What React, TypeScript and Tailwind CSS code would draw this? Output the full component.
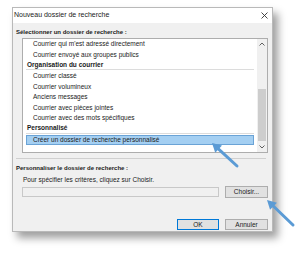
import React from "react";

const items1 = ["Courrier qui m'est adressé directement", "Courrier envoyé aux groupes publics"];
const items2 = [
  "Courrier classé",
  "Courrier volumineux",
  "Anciens messages",
  "Courrier avec pièces jointes",
  "Courrier avec des mots spécifiques",
];

function Item({ text }: { text: string }) {
  return <div className="flex h-[10.5px] items-center pl-[7px] whitespace-nowrap">{text}</div>;
}

function GroupHeader({ text }: { text: string }) {
  return (
    <div className="mb-[1px] flex h-[10px] items-center border-b border-[#dcdcdc] pl-[1px] font-bold whitespace-nowrap">
      {text}
    </div>
  );
}

function Arrow({ x1, y1, x2, y2 }: { x1: number; y1: number; x2: number; y2: number }) {
  const a = Math.atan2(y2 - y1, x2 - x1);
  const len = 9;
  const w = 5;
  const bx = x2 - len * Math.cos(a);
  const by = y2 - len * Math.sin(a);
  const px = -Math.sin(a) * w;
  const py = Math.cos(a) * w;
  return (
    <g>
      <line x1={x1} y1={y1} x2={bx} y2={by} stroke="#5b9bd5" strokeWidth={3} strokeLinecap="round" />
      <polygon points={`${x2},${y2} ${bx + px},${by + py} ${bx - px},${by - py}`} fill="#5b9bd5" />
    </g>
  );
}

export default function App() {
  return (
    <div className="relative h-[253px] w-[300px] overflow-hidden bg-white pt-[7px] pl-[12px] font-['Liberation_Sans',Arial,sans-serif] text-[6.5px] text-[#1a1a1a]">
      <div className="flex h-[225px] w-[261px] flex-col border border-[#b9b9b9] bg-[#f0f0f0] shadow-[5px_6px_8px_rgba(0,0,0,0.38)]">
        {/* title bar */}
        <div className="flex h-[15px] items-center justify-between bg-white pr-[4px] pl-[1px]">
          <span className="text-[7px]">Nouveau dossier de recherche</span>
          <svg width="7" height="7" viewBox="0 0 7 7">
            <path d="M0.5 0.5 L6.5 6.5 M6.5 0.5 L0.5 6.5" stroke="#333" strokeWidth="0.9" />
          </svg>
        </div>

        <div className="flex flex-col pt-[5px]">
          <div className="pl-[3px] text-[6px] font-bold leading-[9px]">Sélectionner un dossier de recherche :</div>

          {/* list box */}
          <div className="mt-[1px] mr-[4px] ml-[9px] flex h-[115px] border border-[#adadad] bg-white">
            <div className="flex flex-1 flex-col pt-[0px] pr-[3px] pl-[3px] text-[6.5px]">
              {items1.map((t) => (
                <Item key={t} text={t} />
              ))}
              <GroupHeader text="Organisation du courrier" />
              {items2.map((t) => (
                <Item key={t} text={t} />
              ))}
              <GroupHeader text="Personnalisé" />
              <div className="flex h-[10px] items-center border border-[#6aa3d6] bg-[#a4cff2] pl-[6px] whitespace-nowrap">
                Créer un dossier de recherche personnalisé
              </div>
            </div>
            {/* scrollbar */}
            <div className="flex w-[10px] flex-col bg-[#f0f0f0]">
              <div className="flex h-[10px] items-center justify-center">
                <svg width="6" height="4" viewBox="0 0 6 4">
                  <path d="M0.5 3.5 L3 1 L5.5 3.5" stroke="#606060" strokeWidth="1" fill="none" />
                </svg>
              </div>
              <div className="mt-[40px] mx-[1px] h-[52px] bg-[#cdcdcd]" />
              <div className="flex-1" />
              <div className="flex h-[10px] items-center justify-center">
                <svg width="6" height="4" viewBox="0 0 6 4">
                  <path d="M0.5 0.5 L3 3 L5.5 0.5" stroke="#606060" strokeWidth="1" fill="none" />
                </svg>
              </div>
            </div>
          </div>

          <div className="mt-[5px] mr-[6px] ml-[3px] h-[1px] bg-[#d0d0d0]" />

          <div className="mt-[5px] pl-[3px] text-[6px] font-bold leading-[9px]">
            Personnaliser le dossier de recherche :
          </div>
          <div className="mt-[2px] pl-[10px] leading-[9px]">Pour spécifier les critères, cliquez sur Choisir.</div>
          <div className="mt-[2px] mr-[4px] ml-[9px] flex items-center gap-[6px]">
            <div className="h-[10px] flex-1 border border-[#c8c8c8] bg-[#f0f0f0]" />
            <div className="flex h-[12px] w-[43px] items-center justify-center border border-[#adadad] bg-[#e1e1e1]">
              Choisir...
            </div>
          </div>

          <div className="mt-[21px] mr-[4px] flex justify-end gap-[6px]">
            <div className="flex h-[11px] w-[42px] items-center justify-center border border-[#0078d7] bg-[#e1e1e1]">
              OK
            </div>
            <div className="flex h-[11px] w-[43px] items-center justify-center border border-[#adadad] bg-[#e1e1e1]">
              Annuler
            </div>
          </div>
        </div>
      </div>

      <svg className="pointer-events-none absolute top-0 left-0" width="300" height="253">
        <Arrow x1={237} y1={166} x2={212} y2={143} />
        <Arrow x1={293} y1={225} x2={267} y2={200} />
      </svg>
    </div>
  );
}
